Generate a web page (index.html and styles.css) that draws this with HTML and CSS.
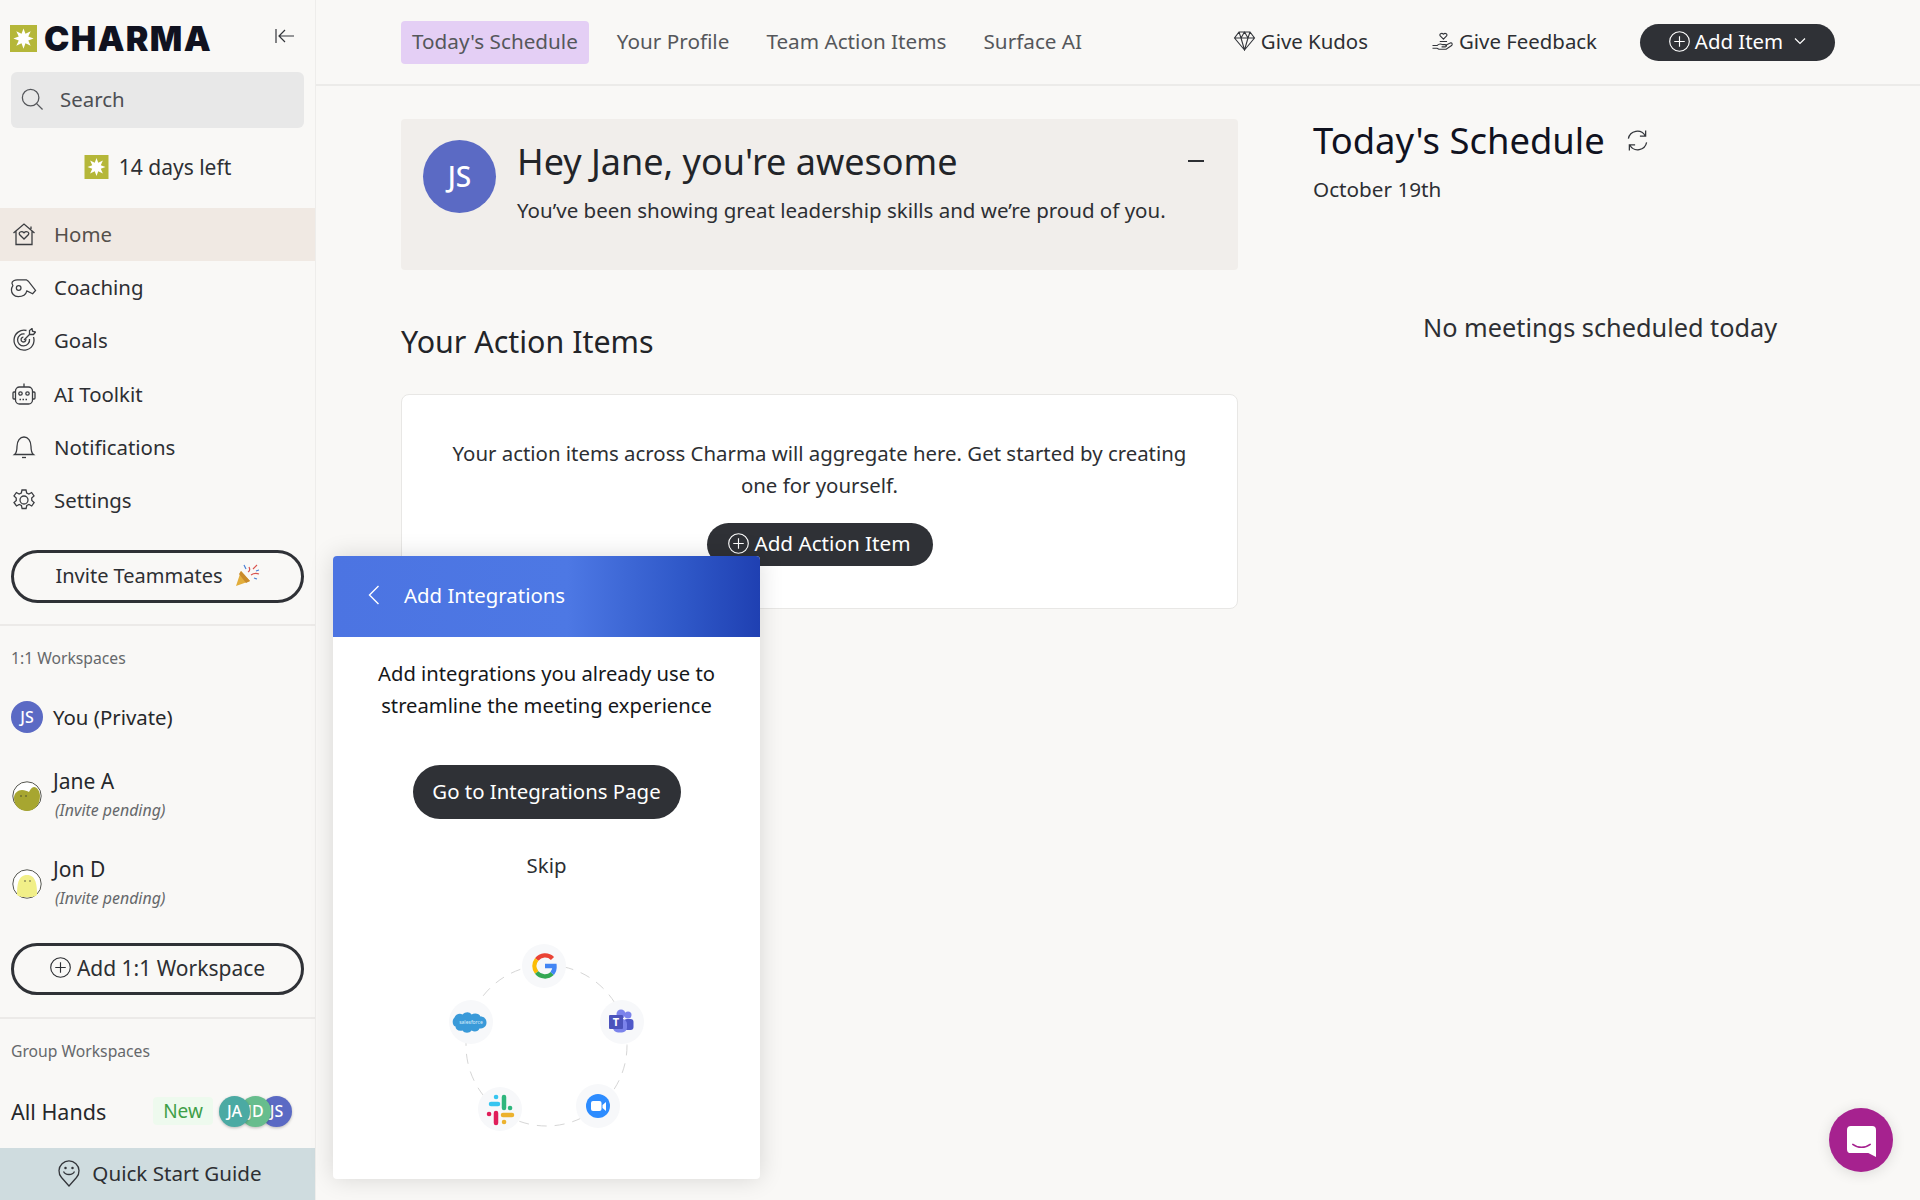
FILE: index.html
```html
<!DOCTYPE html>
<html lang="en">
<head>
    <meta charset="UTF-8">
    <title>Charma - Home</title>
    <link rel="stylesheet" href="styles.css">
</head>
<body>
<svg class="defs" width="0" height="0">
    <symbol id="star" viewBox="0 0 24 24">
        <rect width="24" height="24" fill="#b5b739"/>
        <polygon fill="#fff" points="12,3 13.76,7.75 18.4,5.6 16.25,10.24 21,12 16.25,13.76 18.4,18.4 13.76,16.25 12,21 10.24,16.25 5.6,18.4 7.75,13.76 3,12 7.75,10.24 5.6,5.6 10.24,7.75"/>
    </symbol>
    <symbol id="plus-circle" viewBox="0 0 24 24">
        <circle cx="12" cy="12" r="11.2" fill="none" stroke="currentColor" stroke-width="1.3"/>
        <path d="M12 6v12M6 12h12" fill="none" stroke="currentColor" stroke-width="1.3"/>
    </symbol>
</svg>

<div class="app">
    <!-- sidebar -->
    <aside class="sidebar">
        <div class="brand">
            <svg class="brand-mark"><use href="#star"/></svg>
            <span class="brand-name">CHARMA</span>
            <svg class="collapse" viewBox="0 0 20 16" fill="none" stroke="#33353a" stroke-width="1.2"><path d="M1 1v14M19 8H4.500M10 2L4 8l6 6"/></svg>
        </div>
        <div class="search">
            <svg viewBox="0 0 24 24" fill="none" stroke="#55575b" stroke-width="1.4"><circle cx="10.500" cy="10.500" r="9"/><path d="M16.800 16.800L23.500 23.500"/></svg>
            <span>Search</span>
        </div>
        <div class="trial">
            <svg><use href="#star"/></svg>
            <span>14 days left</span>
        </div>

        <nav class="nav">
            <a class="nav-item active">
                <svg viewBox="0 0 24 24"><path d="M1.500 11L12 2l10.500 9M4 9v13.500h16V9M19 4.500V7"/><path d="M12 17l-4.300-4.200c-1.800-2.200 1.800-4.600 4.300-2 2.500-2.600 6.100-.2 4.300 2z"/></svg>
                Home
            </a>
            <a class="nav-item">
                <svg class="nav-wide" viewBox="0 0 28 24"><path d="M8 4.500h9l2 1.500 7.500 9.500-3 3.500-6-3c-1 4-5 6-9 6-4.500 0-7-3.500-7-7 0-2 .5-3 1.500-4.500L2 8c0-2 3-3.500 5.500-3.500z"/><circle cx="9" cy="13" r="2.400"/></svg>
                Coaching
            </a>
            <a class="nav-item">
                <svg viewBox="0 0 24 24"><path d="M21.500 9a10 10 0 1 1-7-6.500"/><path d="M17.500 11a6 6 0 1 1-5-5"/><path d="M13.800 11a2.400 2.400 0 1 1-2.400-1.800"/><path d="M12 12l6-6M17.500 2.500v4h4l2-2.500-3-.8-.5-2.700z"/></svg>
                Goals
            </a>
            <a class="nav-item">
                <svg viewBox="0 0 24 24"><rect x="3.500" y="5" width="17" height="17" rx="4"/><path d="M12 5V1.500M3.500 10H2a1 1 0 0 0-1 1v5a1 1 0 0 0 1 1h1.500M20.500 10H22a1 1 0 0 1 1 1v5a1 1 0 0 1-1 1h-1.500"/><circle cx="8.500" cy="11.500" r="1.700"/><circle cx="15.500" cy="11.500" r="1.700"/><path d="M7.500 17.500h9" stroke-dasharray="1.500 1.500"/></svg>
                AI Toolkit
            </a>
            <a class="nav-item">
                <svg viewBox="0 0 24 24"><path d="M2.500 19.500c2-1.500 2.500-3 2.500-8C5 6 8 2 12 2s7 4 7 9.500c0 5 .5 6.500 2.500 8z"/><path d="M10 22.500h4"/></svg>
                Notifications
            </a>
            <a class="nav-item">
                <svg viewBox="0 0 24 24"><circle cx="12" cy="12" r="4"/><path d="M10 2h4l.7 3 2.200 1 2.700-1.500 2.400 3.500-2.300 2 .1 2.500 2.300 2-2.400 3.500-2.700-1.500-2.200 1-.7 3h-4l-.7-3-2.200-1-2.700 1.500L2 14.500 4.300 12.500 4.200 10 2 8l2.400-3.500L7.100 6l2.200-1z"/></svg>
                Settings
            </a>
        </nav>

        <button class="btn-outline btn-invite">
            Invite Teammates
            <svg class="popper" viewBox="0 0 26 24">
                <path d="M2 23l5-15 9 10z" fill="#e2ad3b"/>
                <path d="M7 8l9 10-4 2-7-9z" fill="#c98a2a"/>
                <path d="M14 9c2-1 2-3 1-5M17 12c3-2 5-2 8-1M19 6l4-4" fill="none" stroke="#d9534f" stroke-width="1.200"/>
                <path d="M12 6l-2-4M20 15l3 1M22 8l3-1" fill="none" stroke="#4a7fd4" stroke-width="1.200"/>
            </svg>
        </button>
        <div class="rule rule-invite"></div>

        <div class="section-label label-one">1:1 Workspaces</div>
        <div class="person person-you">
            <span class="avatar-js">JS</span>
            <span class="person-name">You (Private)</span>
        </div>
        <div class="person person-invited">
            <svg class="blob" viewBox="0 0 30 30">
                <circle cx="15" cy="15" r="14.200" fill="#fff" stroke="#55564f" stroke-width="1"/>
                <path d="M2 17c0-5 4-8 8-8 3 0 5 1 7 2 1-2 3-5 5-5 3 0 6 4 6 9 0 9-6 15-13 15S2 25 2 17z" fill="#a7a630"/>
                <circle cx="9" cy="15" r=".7" fill="#333"/><circle cx="14" cy="15" r=".7" fill="#333"/>
            </svg>
            <div>
                <div class="person-name person-name-lg">Jane A</div>
                <div class="pending">(Invite pending)</div>
            </div>
        </div>
        <div class="person person-invited">
            <svg class="blob" viewBox="0 0 30 30">
                <circle cx="15" cy="15" r="14.200" fill="#fff" stroke="#55564f" stroke-width="1"/>
                <path d="M5 26c0-10 1-20 10-20s10 10 10 20c-3 3-17 3-20 0z" fill="#f1ef88"/>
                <circle cx="13" cy="12" r=".7" fill="#333"/><circle cx="18" cy="12" r=".7" fill="#333"/>
            </svg>
            <div>
                <div class="person-name person-name-lg">Jon D</div>
                <div class="pending">(Invite pending)</div>
            </div>
        </div>

        <button class="btn-outline btn-add-workspace">
            <svg><use href="#plus-circle"/></svg>
            Add 1:1 Workspace
        </button>
        <div class="rule rule-workspace"></div>

        <div class="section-label label-group">Group Workspaces</div>
        <div class="group-row">
            <span class="person-name all-hands">All Hands</span>
            <span class="badge-new">New</span>
            <span class="stack">
                <span class="stack-item stack-ja">JA</span>
                <span class="stack-item stack-d">JD</span>
                <span class="stack-item stack-js">JS</span>
            </span>
        </div>

        <div class="quick-start">
            <svg viewBox="0 0 22 28" fill="none" stroke="#33353a" stroke-width="1.300"><path d="M11 27L3.500 18.500A10 10 0 1 1 18.500 18.500z"/><circle cx="7.500" cy="9" r=".6"/><circle cx="14.500" cy="9" r=".6"/><path d="M5.500 12.500c2 4 9 4 11 0"/></svg>
            Quick Start Guide
        </div>
    </aside>

    <!-- main column -->
    <main class="main">
        <header class="topbar">
            <a class="tab tab-active">Today's Schedule</a>
            <a class="tab">Your Profile</a>
            <a class="tab">Team Action Items</a>
            <a class="tab">Surface AI</a>
            <a class="top-link link-kudos">
                <svg viewBox="0 0 22 20" fill="none" stroke="#33353a" stroke-width="1.100"><path d="M5.500 1h11L21 7 11 19 1 7zM1 7h20M7.500 7L11 19l3.500-12M5.500 1l2 6 3.500-6 3.500 6 2-6"/></svg>
                Give Kudos
            </a>
            <a class="top-link link-feedback">
                <svg viewBox="0 0 24 22" fill="none" stroke="#33353a" stroke-width="1.200"><path d="M13 9L9.500 5.500c-1.500-2 1.500-4 3.500-2 2-2 5 0 3.500 2z"/><path d="M1 16h5c2-2 4-2 6-1h3c2 0 2 2 0 2.500h-4M15 16l6-3c2 0 2 2 1 3l-6 4H8l-2-1H1M9 11.500h8"/></svg>
                Give Feedback
            </a>
            <button class="btn-dark btn-add-item">
                <svg><use href="#plus-circle"/></svg>
                Add Item
                <svg class="chev" viewBox="0 0 12 8" fill="none" stroke="#fff" stroke-width="1.200"><path d="M1 1.500l5 5 5-5"/></svg>
            </button>
        </header>

        <div class="content">
            <section class="left-col">
                <div class="kudos-card">
                    <span class="kudos-avatar">JS</span>
                    <div class="kudos-text">
                        <h1>Hey Jane, you're awesome</h1>
                        <p>You’ve been showing great leadership skills and we’re proud of you.</p>
                    </div>
                    <span class="kudos-minus"></span>
                </div>

                <h2>Your Action Items</h2>
                <div class="action-card">
                    <p>Your action items across Charma will aggregate here. Get started by creating one for yourself.</p>
                    <button class="btn-dark btn-action">
                        <svg><use href="#plus-circle"/></svg>
                        Add Action Item
                    </button>
                </div>
            </section>

            <section class="right-col">
                <div class="schedule-head">
                    <h2>Today's Schedule</h2>
                    <svg viewBox="0 0 24 24" fill="none" stroke="#33353a" stroke-width="1.300"><path d="M2.500 10A9.500 9.500 0 0 1 20 7M21.500 14A9.500 9.500 0 0 1 4 17M20.500 1.500V7.500h-6M3.500 22.500V16.500h6"/></svg>
                </div>
                <div class="schedule-date">October 19th</div>
                <div class="no-meetings">No meetings scheduled today</div>
            </section>
        </div>
    </main>

    <!-- integrations popup -->
    <div class="popup">
        <div class="popup-head">
            <svg viewBox="0 0 12 20" fill="none" stroke="#fff" stroke-width="1.400"><path d="M10.500 1L1.500 10l9 9"/></svg>
            Add Integrations
        </div>
        <p class="popup-copy">Add integrations you already use to streamline the meeting experience</p>
        <button class="btn-dark btn-integrations">Go to Integrations Page</button>
        <div class="skip">Skip</div>
        <svg class="wheel" viewBox="0 0 240 220">
            <circle cx="126.500" cy="126.500" r="80.500" fill="none" stroke="#d6d6d6" stroke-width="1" stroke-dasharray="10 8"/>
            <g fill="#f7f8fa">
                <circle cx="124" cy="47" r="22"/>
                <circle cx="202" cy="103" r="22"/>
                <circle cx="178" cy="187" r="22"/>
                <circle cx="80" cy="190" r="22"/>
                <circle cx="51" cy="103" r="22"/>
            </g>
            <!-- google -->
            <g fill="none" stroke-width="4.400">
                <path d="M132.500 39.500a10.500 10.500 0 0 0-15.800 1" stroke="#ea4335"/>
                <path d="M116.700 40.500a10.500 10.500 0 0 0 0 13" stroke="#fbbc05"/>
                <path d="M116.700 53.500a10.500 10.500 0 0 0 15.500 1" stroke="#34a853"/>
                <path d="M132.200 54.500a10.500 10.500 0 0 0 2.300-7.500H125" stroke="#4285f4"/>
            </g>
            <!-- teams -->
            <circle cx="208" cy="96" r="3.500" fill="#7b83eb"/>
            <circle cx="201" cy="95" r="4.500" fill="#7b83eb"/>
            <rect x="204" y="100" width="9.500" height="11" rx="3" fill="#5059c9"/>
            <rect x="193" y="100" width="14" height="13.500" rx="5" fill="#7b83eb"/>
            <rect x="189" y="96" width="14" height="14" rx="1" fill="#4b53bc"/>
            <text class="teams-t" x="196" y="107">T</text>
            <!-- zoom -->
            <circle cx="178" cy="187" r="12" fill="#2d8cff"/>
            <rect x="171" y="182" width="10.500" height="10" rx="2" fill="#fff"/>
            <path d="M182.500 186l3.500-3v9l-3.500-3z" fill="#fff"/>
            <!-- slack -->
            <g stroke-width="4.500" stroke-linecap="round" transform="translate(0 6)">
                <path d="M71 179h7" stroke="#36c5f0"/>
                <path d="M76 172h.1" stroke="#36c5f0"/>
                <path d="M84 172v11" stroke="#2eb67d"/>
                <path d="M90 183h.1" stroke="#2eb67d"/>
                <path d="M83 190h9" stroke="#ecb22e"/>
                <path d="M84 197h.1" stroke="#ecb22e"/>
                <path d="M76 188v10" stroke="#e01e5a"/>
                <path d="M69 189h.1" stroke="#e01e5a"/>
            </g>
            <!-- salesforce -->
            <path transform="translate(-1.500 3.500)" d="M44 92c3-3 7-3 9 0 3-2 8-1 9 2 4 0 6 3 6 6 0 4-3 6-7 6-1 3-5 4-8 2-2 3-7 3-9 0-4 1-7-1-7-4-3-1-4-6-1-9 1-3 5-5 8-3z" fill="#3a9ad9"/>
            <text class="sf-text" x="51" y="104.500">salesforce</text>
        </svg>
    </div>

    <!-- chat launcher -->
    <div class="chat">
        <svg viewBox="0 0 30 32"><path d="M4 0h22a4 4 0 0 1 4 4v28l-8-4H4a4 4 0 0 1-4-4V4a4 4 0 0 1 4-4z" fill="#fff"/><path d="M6 19c5 4 13 4 18 0" fill="none" stroke="#a6228f" stroke-width="1.600" stroke-linecap="round"/></svg>
    </div>
</div>
</body>
</html>
```

FILE: styles.css
```css
* { box-sizing: border-box; }

body {
    margin: 0;
    font-family: "Noto Sans", "Open Sans", Arial, sans-serif;
    background-color: #f9f8f6;
    color: #2d2f33;
    font-size: 20.4px;
}

.defs { position: absolute; }

.app {
    position: relative;
    display: flex;
    height: 1200px;
    overflow: hidden;
}

button {
    font-family: inherit;
    font-size: 20.4px;
    cursor: pointer;
}

/* sidebar */
.sidebar {
    width: 316px;
    flex-shrink: 0;
    display: flex;
    flex-direction: column;
    border-right: 1px solid #eeedeb;
}

.brand {
    height: 72px;
    padding: 5px 20px 0 10px;
    display: flex;
    align-items: center;
}
.brand-mark { width: 27px; height: 27px; }
.brand-name {
    margin-left: 7px;
    font-family: Inter, "Liberation Sans", sans-serif;
    font-weight: 900;
    font-size: 34px;
    letter-spacing: 1.3px;
    color: #10121f;
}
.collapse { width: 20px; height: 16px; margin: -6px 0 0 auto; }

.search {
    margin: 0 11px;
    height: 56px;
    padding: 0 10px 2px;
    background-color: #e8e8e8;
    border-radius: 6px;
    display: flex;
    align-items: center;
    gap: 17px;
    color: #4d4f54;
}
.search svg { width: 22px; height: 22px; }

.trial {
    height: 80px;
    padding-bottom: 2px;
    display: flex;
    align-items: center;
    justify-content: center;
    gap: 10px;
    font-size: 21px;
}
.trial svg { width: 25px; height: 24px; }

.nav-item {
    height: 53.3px;
    padding: 0 0 2px 12px;
    display: flex;
    align-items: center;
    gap: 18px;
}
.nav-item svg {
    width: 24px;
    height: 24px;
    fill: none;
    stroke: #3b3d41;
    stroke-width: 1.3;
}
.nav-item .nav-wide { width: 27px; margin: 0 -1px 0 -2px; }
.nav-item.active { background-color: #f0e9e3; color: #54504b; }

.btn-outline {
    margin: 0 11px;
    height: 53px;
    padding: 0 0 2px;
    border: 3px solid #2f3136;
    border-radius: 27px;
    background: transparent;
    color: #2d2f33;
    display: flex;
    align-items: center;
    justify-content: center;
}
.btn-invite { margin-top: 22px; gap: 11px; font-size: 20px; }
.popper { width: 26px; height: 24px; }
.btn-add-workspace { margin-top: 15px; height: 52px; gap: 6px; font-size: 21px; }
.btn-add-workspace svg { width: 21px; height: 21px; }

.rule { height: 2px; background-color: #eceae8; }
.rule-invite { margin-top: 21px; }
.rule-workspace { margin-top: 22px; }

.section-label {
    padding-left: 11px;
    display: flex;
    align-items: center;
    font-size: 15.7px;
    color: #66686b;
}
.label-one { height: 64px; }
.label-group { height: 66px; padding-bottom: 2px; }

.person {
    display: flex;
    align-items: center;
    padding-left: 11px;
}
.person-name { color: #26282b; }
.person-name-lg { font-size: 21px; }
.person-you { height: 62px; padding-bottom: 7px; gap: 10px; }
.person-invited { height: 88px; gap: 10px; }
.person-invited > div { margin-top: -3px; }
.avatar-js {
    width: 32px;
    height: 32px;
    border-radius: 50%;
    background-color: #5b6ac4;
    color: #fff;
    font-size: 16px;
    font-weight: 500;
    display: flex;
    align-items: center;
    justify-content: center;
}
.blob { width: 30px; height: 30px; margin: 0 1px; }
.pending {
    margin: 4px 0 0 2px;
    font-size: 15.9px;
    font-style: italic;
    color: #66686b;
}

.group-row {
    height: 53px;
    padding-left: 11px;
    display: flex;
    align-items: center;
}
.all-hands { width: 97px; font-size: 21.5px; }
.badge-new {
    margin-left: 45px;
    width: 60px;
    height: 28px;
    background-color: #eefaee;
    color: #3f9f48;
    border-radius: 4px;
    font-size: 19px;
    text-align: center;
    line-height: 28px;
}
.stack { margin-left: 6px; display: flex; }
.stack-item {
    width: 31px;
    height: 31px;
    border-radius: 50%;
    color: #fff;
    font-size: 16px;
    font-weight: 500;
    display: flex;
    align-items: center;
    justify-content: center;
    box-shadow: 0 1px 3px rgba(0,0,0,0.25);
}
.stack-item + .stack-item { margin-left: -10px; }
.stack-ja { background-color: #4baaa3; z-index: 3; }
.stack-d { background-color: #67bd8d; z-index: 2; }
.stack-js { background-color: #5b6ac4; z-index: 1; }

.quick-start {
    margin-top: auto;
    height: 52px;
    padding: 0 0 2px 5px;
    background-color: #cfdcdf;
    display: flex;
    align-items: center;
    justify-content: center;
    gap: 12px;
    font-size: 20.6px;
}
.quick-start svg { width: 22px; height: 28px; }

/* top bar */
.main { flex: 1; min-width: 0; }

.topbar {
    height: 86px;
    padding-left: 85px;
    border-bottom: 2px solid #ecebe9;
    display: flex;
    align-items: center;
}
.tab { color: #55575b; margin-left: 37px; padding-bottom: 2px; font-size: 20.7px; }
.tab:nth-child(2) { margin-left: 28px; }
.tab-active {
    margin-left: 0;
    height: 43px;
    padding: 0 11px;
    background-color: #e4cff5;
    border-radius: 4px;
    line-height: 41px;
}
.top-link { display: flex; align-items: center; gap: 5px; padding-bottom: 2px; }
.top-link svg { width: 23px; height: 20px; }
.link-kudos { margin-left: auto; }
.link-feedback { margin-left: 63px; }

.btn-dark {
    border: 0;
    padding: 0 0 2px;
    background-color: #2f3136;
    color: #fff;
    display: flex;
    align-items: center;
    justify-content: center;
}
.btn-add-item {
    margin: 0 85px 0 43px;
    width: 195px;
    height: 37px;
    border-radius: 19px;
    gap: 5px;
}
.btn-add-item svg, .btn-action svg { width: 21px; height: 21px; }
.btn-add-item .chev { width: 12px; height: 8px; margin-left: 6px; }

/* page content */
.content {
    display: flex;
    padding: 33px 0 0 85px;
}
.left-col { width: 837px; flex-shrink: 0; }
.right-col { margin-left: 75px; width: 580px; }

.kudos-card {
    height: 151px;
    padding: 21px 22px;
    background-color: #f1eeeb;
    border-radius: 4px;
    display: flex;
}
.kudos-avatar {
    width: 73px;
    height: 73px;
    flex-shrink: 0;
    padding-bottom: 2px;
    border-radius: 50%;
    background-color: #5b6ac4;
    color: #fff;
    font-size: 28px;
    font-weight: 500;
    display: flex;
    align-items: center;
    justify-content: center;
}
.kudos-text { margin-left: 21px; }
.kudos-text h1 {
    margin: 0;
    font-size: 36px;
    font-weight: 400;
    line-height: 44px;
    color: #222428;
}
.kudos-text p { margin: 12px 0 0; line-height: 28px; font-size: 20.5px; }
.kudos-minus {
    width: 16px;
    height: 2px;
    margin: 20px 12px 0 auto;
    background-color: #2d2f33;
}

h2 {
    margin: 50px 0 30px;
    font-size: 30.4px;
    font-weight: 400;
    line-height: 44px;
    color: #222428;
}

.action-card {
    height: 215px;
    padding: 42px 50px 0;
    background-color: #fff;
    border: 1px solid #e8e7e5;
    border-radius: 8px;
    display: flex;
    flex-direction: column;
    align-items: center;
}
.action-card p { margin: 0; line-height: 32px; text-align: center; }
.btn-action {
    margin-top: 22px;
    width: 226px;
    height: 43px;
    padding-bottom: 3px;
    border-radius: 22px;
    gap: 5px;
    font-size: 20.7px;
}

.schedule-head { display: flex; align-items: center; gap: 21px; margin-top: -1px; }
.schedule-head h2 { margin: 0; font-size: 36.4px; color: #10121f; }
.schedule-head svg { width: 23px; height: 23px; }
.schedule-date { margin-top: 13px; font-size: 20.7px; }
.no-meetings {
    margin: 107px 0 0 110px;
    font-size: 25.3px;
}

/* integrations popup */
.popup {
    position: absolute;
    left: 333px;
    top: 556px;
    width: 427px;
    height: 623px;
    background-color: #fff;
    border-radius: 4px;
    box-shadow: 0 0 24px rgba(0,0,0,0.14);
    display: flex;
    flex-direction: column;
    align-items: center;
}
.popup-head {
    align-self: stretch;
    height: 81px;
    padding: 0 0 3px 35px;
    border-radius: 4px 4px 0 0;
    background: linear-gradient(90deg, #4c74e2 0%, #4d78e4 55%, #2f58c8 82%, #1f40b2 100%);
    color: #fff;
    display: flex;
    align-items: center;
    gap: 24px;
}
.popup-head svg { width: 12px; height: 20px; }
.popup-copy {
    margin: 20px 0 0;
    width: 360px;
    font-size: 20.2px;
    line-height: 32px;
    text-align: center;
    color: #15171a;
}
.btn-integrations {
    margin-top: 44px;
    width: 268px;
    height: 54px;
    border-radius: 27px;
}
.skip { margin-top: 32px; }
.wheel { align-self: flex-start; width: 240px; height: 220px; margin: 40px 0 0 87px; }
.teams-t { font-size: 11px; font-weight: 700; fill: #fff; text-anchor: middle; }
.sf-text { font-size: 5px; fill: #d8ecfa; text-anchor: middle; }

/* chat launcher */
.chat {
    position: absolute;
    left: 1829px;
    top: 1108px;
    width: 64px;
    height: 64px;
    border-radius: 50%;
    background-color: #a6228f;
    box-shadow: 0 2px 14px rgba(0,0,0,0.12);
    display: flex;
    align-items: center;
    justify-content: center;
}
.chat svg { width: 29px; height: 31px; margin-top: 2px; }
```
